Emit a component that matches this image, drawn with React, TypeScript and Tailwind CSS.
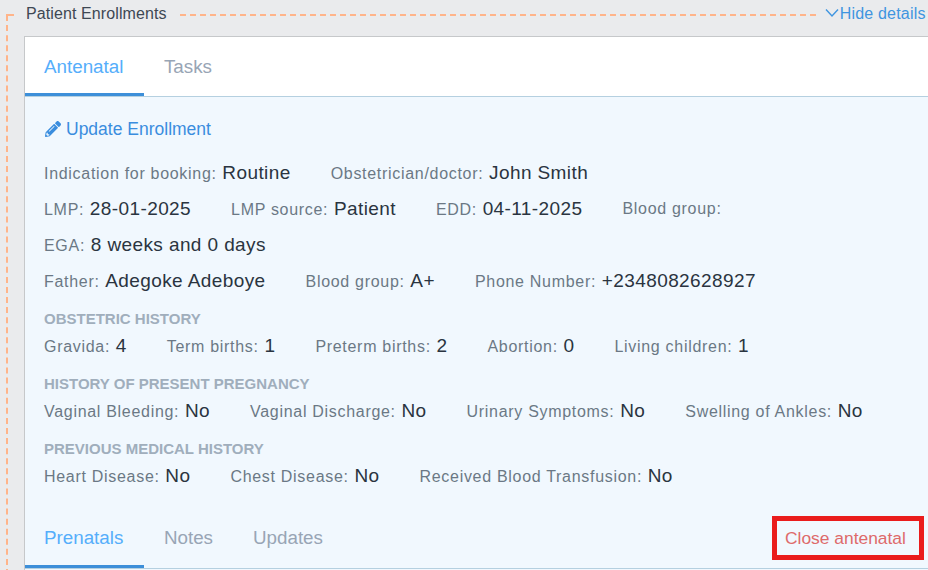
import { FaPencilAlt } from "react-icons/fa";

const font = "font-['Liberation_Sans',Arial,sans-serif]";

function F({ label, value }: { label: string; value?: string }) {
  return (
    <div className="flex items-baseline gap-[5.7px] whitespace-nowrap">
      <span className="text-[16px] tracking-[0.7px] text-[#6b7885]">{label}</span>
      {value && <span className="text-[19px] tracking-[0.4px] text-[#2a3440]">{value}</span>}
    </div>
  );
}

function Row({ items, className = "h-[36px]" }: { items: [string, string?][]; className?: string }) {
  return (
    <div className={`flex items-center gap-[40px] ${className}`}>
      {items.map(([l, v]) => (
        <F key={l} label={l} value={v} />
      ))}
    </div>
  );
}

function Heading({ children }: { children: string }) {
  return <div className="h-[17px] text-[15px] leading-[17px] font-bold text-[#a0aebc]">{children}</div>;
}

function Tab({ children, active, top }: { children: string; active?: boolean; top?: boolean }) {
  return (
    <div
      className={`flex h-full items-center border-b-[3px] text-[18.8px] ${top ? "pt-[4px]" : "pt-[2px]"} ${
        active ? "border-[#3d8fd9] pr-[20.6px] pl-[19px] text-[#55aefb]" : "border-transparent px-[20px] text-[#98a5b5]"
      }`}
    >
      {children}
    </div>
  );
}

export default function App() {
  return (
    <div className={`${font} h-[570px] w-[928px] overflow-hidden bg-[#eaebed] pt-[3px] pl-[6px]`}>
      <div className="flex h-[22px] items-center">
        <span className="mt-[2px] h-0 w-[8px] border-t-2 border-dashed border-[#ffb48a]" />
        <span className="pr-[13px] pl-[12px] text-[16px] tracking-[0.1px] text-[#3e4854]">Patient Enrollments</span>
        <span className="mt-[2px] h-0 w-[636px] border-t-2 border-dashed border-[#ffb48a]" />
        <span className="ml-[9px] flex items-center text-[16px] tracking-[0.2px] text-[#3f95e0]">
          <svg width="14" height="10" viewBox="0 0 14 10" className="mr-[1px] -mt-[3px]" fill="none" stroke="#3f95e0" strokeWidth="1.4">
            <path d="M1 1.5 7 8l6-6.5" />
          </svg>
          Hide details
        </span>
      </div>
      <div className="-mt-[10px] h-[560px] border-l-2 border-dashed border-[#ffb48a] pl-[16px] pt-[21px]">
        <div className="h-[600px] border-t border-l border-[#c6c8ca] bg-[#f1f8fe]">
          <div className="flex h-[60px] items-stretch border-b border-[#b5d0e0] bg-white">
            <Tab active top>Antenatal</Tab>
            <Tab top>Tasks</Tab>
          </div>
          <div className="pt-[17px] pl-[20px]">
            <div className="flex h-[30px] items-center gap-[5px] text-[17.5px] text-[#3a8dde]">
              <FaPencilAlt size={16} color="#3a8dde" />
              Update Enrollment
            </div>
            <div className="mt-[11px] -ml-[1px]">
              <Row items={[["Indication for booking:", "Routine"], ["Obstetrician/doctor:", "John Smith"]]} />
              <Row items={[["LMP:", "28-01-2025"], ["LMP source:", "Patient"], ["EDD:", "04-11-2025"], ["Blood group:"]]} />
              <Row items={[["EGA:", "8 weeks and 0 days"]]} />
              <Row items={[["Father:", "Adegoke Adeboye"], ["Blood group:", "A+"], ["Phone Number:", "+2348082628927"]]} />
              <div className="mt-[11px]">
                <Heading>OBSTETRIC HISTORY</Heading>
                <Row className="h-[38px]" items={[["Gravida:", "4"], ["Term births:", "1"], ["Preterm births:", "2"], ["Abortion:", "0"], ["Living children:", "1"]]} />
              </div>
              <div className="mt-[10px]">
                <Heading>HISTORY OF PRESENT PREGNANCY</Heading>
                <Row className="h-[38px]" items={[["Vaginal Bleeding:", "No"], ["Vaginal Discharge:", "No"], ["Urinary Symptoms:", "No"], ["Swelling of Ankles:", "No"]]} />
              </div>
              <div className="mt-[10px]">
                <Heading>PREVIOUS MEDICAL HISTORY</Heading>
                <Row className="h-[38px]" items={[["Heart Disease:", "No"], ["Chest Disease:", "No"], ["Received Blood Transfusion:", "No"]]} />
              </div>
            </div>
          </div>
          <div className="mt-[14px] flex h-[60px] items-stretch justify-between border-b border-[#b5d0e0]">
            <div className="flex items-stretch">
              <Tab active>Prenatals</Tab>
              <Tab>Notes</Tab>
              <Tab>Updates</Tab>
            </div>
            <div className="mt-[7px] mr-[4px] mb-[8px] flex w-[152px] items-center border-[5px] border-[#ea1c1c] pl-[8px] text-[17.4px] text-[#de6a6a]">
              Close antenatal
            </div>
          </div>
        </div>
      </div>
    </div>
  );
}
